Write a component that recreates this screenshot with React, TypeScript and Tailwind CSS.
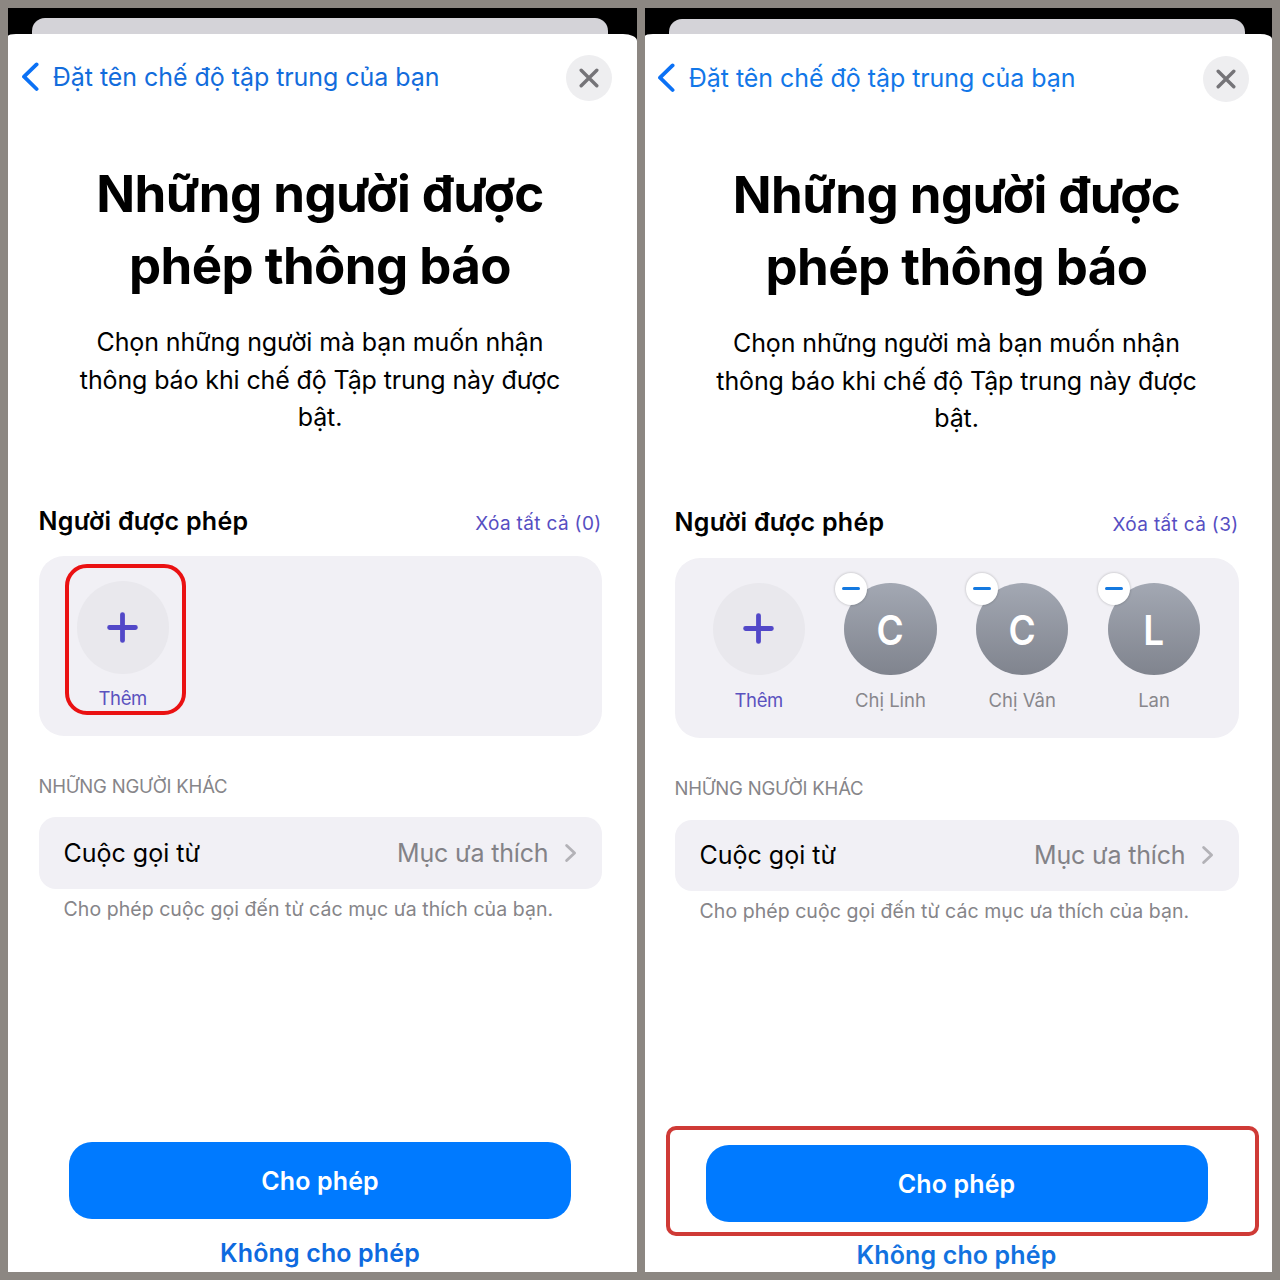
type Person = { name: string; initial: string };

type Metrics = {
  panel: string;
  backSheet: string;
  sheet: string;
  header: string;
  headerTint: string;
  close: string;
  title: string;
  people: string;
  peopleItems: string;
  label: string;
  row: string;
  note: string;
  footer: string;
  button: string;
  decline: string;
};

const LEFT: Metrics = {
  panel: "w-[629px]",
  backSheet: "ml-6 mr-[29px] mt-2.5 h-4",
  sheet: "rounded-tl-[8px_2px] rounded-tr-[14px_7px] pl-[30.5px] pr-[35.5px]",
  header: "h-[86px]",
  headerTint: "pb-px text-[#126cdc]",
  close: "mt-0.5",
  title: "mt-[38px]",
  people: "mt-[20.4px] h-[180px]",
  peopleItems: "pt-[25px]",
  label: "mt-[37.6px]",
  row: "mt-[19px] h-[71.5px]",
  note: "mt-[7px]",
  footer: "pb-[4.4px]",
  button: "mb-[18.6px] h-[76.7px]",
  decline: "text-[#0e6ae0]",
};

const RIGHT: Metrics = {
  panel: "w-[627px]",
  backSheet: "ml-[23.5px] mr-[27px] mt-[11px] h-[15px]",
  sheet: "rounded-tl-[8px_2px] rounded-tr-[12px_5px] pl-[29.5px] pr-[33.5px]",
  header: "h-[88px]",
  headerTint: "text-[#1277e8]",
  close: "mt-px",
  title: "mt-[37px]",
  people: "mt-[20.6px] h-[180.3px]",
  peopleItems: "pt-[25px]",
  label: "mt-[37.8px]",
  row: "mt-[19.8px] h-[71.5px]",
  note: "mt-[7px]",
  footer: "pb-[2.4px]",
  button: "mb-[17.6px] h-[77px]",
  decline: "text-[#1272e0]",
};

function BackChevron() {
  return (
    <svg className="h-[30px] w-[18px]" viewBox="0 0 18 30" fill="none">
      <path
        d="M15.6 2.4 3 14.7 15.6 27"
        stroke="#0b71f5"
        strokeWidth="3.8"
        strokeLinecap="round"
        strokeLinejoin="round"
      />
    </svg>
  );
}

function CloseButton({ className }: { className: string }) {
  return (
    <button className={`flex size-[46px] items-center justify-center rounded-full bg-[#eeeef0] ${className}`}>
      <svg className="size-5" viewBox="0 0 20 20" fill="none">
        <path d="M2.2 2.2 17.8 17.8M17.8 2.2 2.2 17.8" stroke="#757478" strokeWidth="3.4" strokeLinecap="round" />
      </svg>
    </button>
  );
}

function AddPerson({ highlighted }: { highlighted: boolean }) {
  return (
    <div className="relative flex w-[92.4px] flex-col items-center">
      <div className="flex size-[92.4px] items-center justify-center rounded-full bg-[#e9e8ed]">
        <svg className="size-[31px]" viewBox="0 0 31 31" fill="none">
          <path d="M15.5 2.6v25.8M2.6 15.5h25.8" stroke="#5248c8" strokeWidth="4.8" strokeLinecap="round" />
        </svg>
      </div>
      <span className="mt-[12.6px] text-[18.5px] leading-6 tracking-[-0.02em] text-[#5a52bf]">Thêm</span>
      {highlighted && (
        <div className="absolute -left-[11.7px] -top-[17.6px] h-[151.5px] w-[121.4px] rounded-[22px] border-4 border-[#ea1112]" />
      )}
    </div>
  );
}

function PersonItem({ person }: { person: Person }) {
  return (
    <div className="relative flex w-[92.4px] flex-col items-center">
      <div className="flex size-[92.4px] items-center justify-center rounded-full bg-linear-to-b from-[#a3a8b3] to-[#80848e] text-white">
        <span className="mt-[3px] scale-x-90 text-[41px] font-semibold leading-none">{person.initial}</span>
      </div>
      <span className="mt-[12.6px] whitespace-nowrap text-[18.5px] leading-6 text-[#88878c]">{person.name}</span>
      <div className="absolute -left-[9.7px] -top-[10px] flex size-8 items-center justify-center rounded-full bg-white shadow-[0_0_2px_1px_rgba(0,0,0,0.12)]">
        <div className="h-[3px] w-[18px] rounded-full bg-[#1479e0]" />
      </div>
    </div>
  );
}

function FocusPanel({ m, people, step }: { m: Metrics; people: Person[]; step: "add" | "allow" }) {
  return (
    <section className={`flex h-full flex-col overflow-hidden bg-black ${m.panel}`}>
      <div className={`shrink-0 rounded-t-[13px] bg-[#d4d3d8] ${m.backSheet}`} />
      <div className={`flex flex-1 flex-col bg-white ${m.sheet}`}>
        <header className={`-ml-[18px] -mr-[10.5px] flex shrink-0 items-center ${m.header}`}>
          <BackChevron />
          <span className={`ml-[14.3px] flex-1 whitespace-nowrap text-[25px] leading-[30px] tracking-[-0.002em] ${m.headerTint}`}>
            Đặt tên chế độ tập trung của bạn
          </span>
          <CloseButton className={m.close} />
        </header>

        <h1 className={`text-center text-[51px] font-bold leading-[71.5px] tracking-[-0.011em] ${m.title}`}>
          Những người được
          <br />
          phép thông báo
        </h1>
        <p className="mt-[23.3px] whitespace-nowrap text-center text-[25px] leading-[37.5px] tracking-[-0.005em]">
          Chọn những người mà bạn muốn nhận
          <br />
          thông báo khi chế độ Tập trung này được
          <br />
          bật.
        </p>

        <div className="mt-[69.3px] flex h-[30px] items-baseline justify-between">
          <h2 className="text-[25px] font-semibold leading-[30px] tracking-[0.012em]">Người được phép</h2>
          <button className="text-[19px] leading-6 tracking-[0.018em] text-[#564ec2]">
            Xóa tất cả ({people.length})
          </button>
        </div>
        <div className={`rounded-[25px] bg-[#f1f0f5] ${m.people}`}>
          <div className={`flex gap-[39.4px] pl-[38px] ${m.peopleItems}`}>
            <AddPerson highlighted={step === "add"} />
            {people.map((p) => (
              <PersonItem key={p.name} person={p} />
            ))}
          </div>
        </div>

        <h3 className={`text-[18.5px] leading-6 tracking-[-0.01em] text-[#868589] ${m.label}`}>NHỮNG NGƯỜI KHÁC</h3>
        <div className={`flex items-center rounded-[17px] bg-[#f1f0f5] pl-[25px] pr-6 text-[25px] ${m.row}`}>
          <span className="flex-1 pt-[1.6px]">Cuộc gọi từ</span>
          <span className="pt-[1.6px] tracking-[-0.006em] text-[#838287]">Mục ưa thích</span>
          <svg className="ml-[15px] h-5 w-3.5" viewBox="0 0 14 20" fill="none">
            <path d="m2.6 2.4 8 7.6-8 7.6" stroke="#b3b2b7" strokeWidth="2.8" strokeLinecap="round" strokeLinejoin="round" />
          </svg>
        </div>
        <p className={`whitespace-nowrap pl-[25px] text-[19.5px] leading-[26px] tracking-[0.0026em] text-[#868589] ${m.note}`}>
          Cho phép cuộc gọi đến từ các mục ưa thích của bạn.
        </p>

        <div className={`mt-auto flex flex-col items-center ${m.footer}`}>
          <div className={`relative flex w-[502px] ${m.button}`}>
            <button className="flex-1 rounded-[23px] bg-[#007aff] pt-[1.6px] text-[25px] font-semibold tracking-[0.006em] text-white">
              Cho phép
            </button>
            {step === "allow" && (
              <div className="absolute -left-10 -top-[19.5px] h-[110.5px] w-[593px] rounded-[10px] border-4 border-[#cf3a36]" />
            )}
          </div>
          <button className={`text-[25px] font-semibold leading-[30px] tracking-[0.005em] ${m.decline}`}>
            Không cho phép
          </button>
        </div>
      </div>
    </section>
  );
}

const ALLOWED: Person[] = [
  { name: "Chị Linh", initial: "C" },
  { name: "Chị Vân", initial: "C" },
  { name: "Lan", initial: "L" },
];

export default function App() {
  return (
    <main className="flex h-[1280px] w-[1280px] gap-2 bg-[#8c8782] p-2 font-['Inter','Liberation_Sans',sans-serif] text-black">
      <FocusPanel m={LEFT} people={[]} step="add" />
      <FocusPanel m={RIGHT} people={ALLOWED} step="allow" />
    </main>
  );
}
